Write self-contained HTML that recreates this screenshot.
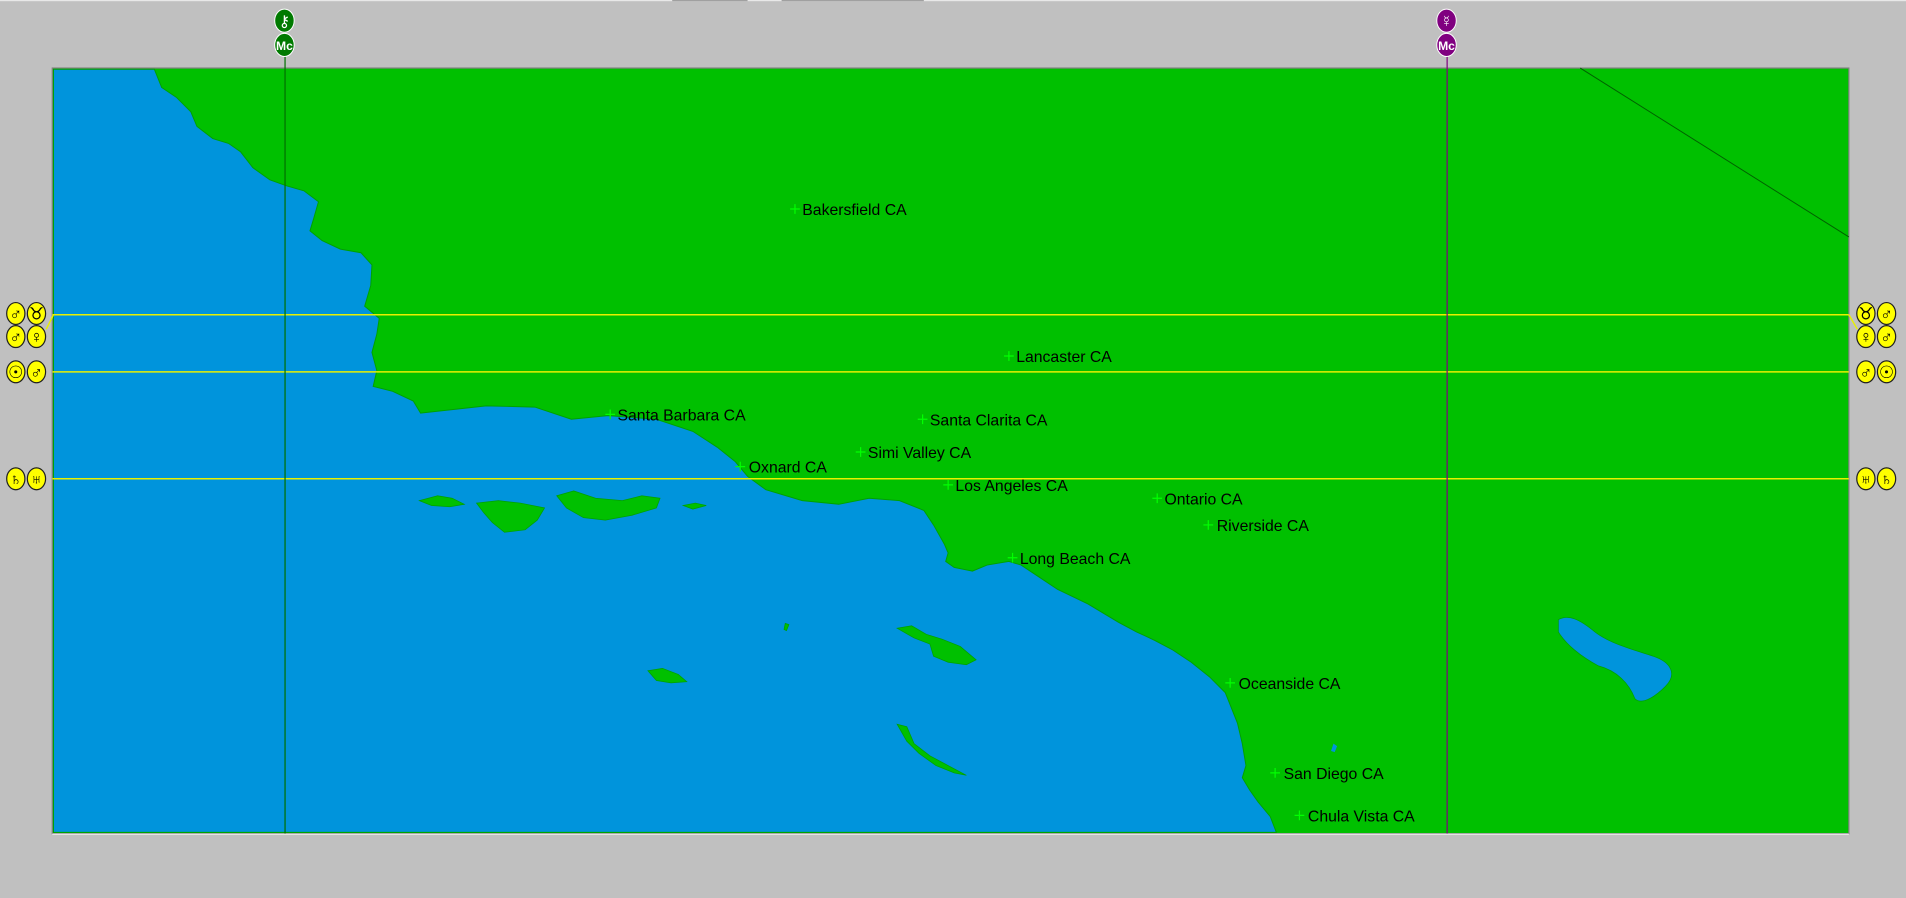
<!DOCTYPE html>
<html><head><meta charset="utf-8"><style>
html,body{margin:0;padding:0;background:#c0c0c0;overflow:hidden}
svg{display:block}
text{font-family:"Liberation Sans","DejaVu Sans",sans-serif}
</style></head><body>
<svg width="1906" height="898" viewBox="0 0 1568 739" preserveAspectRatio="none" xmlns="http://www.w3.org/2000/svg">
<rect x="0" y="0" width="1568" height="739" fill="#c0c0c0"/>
<rect x="0" y="0" width="1568" height="1" fill="#e8e8e8"/>
<rect x="553" y="0" width="62" height="1" fill="#a0a0a0"/>
<rect x="643" y="0" width="117" height="1" fill="#a0a0a0"/>
<rect x="43" y="56" width="1478" height="630" fill="#00c000" stroke="#808080" stroke-width="1"/>
<polygon fill="#0094dc" stroke="#00a000" stroke-width="0.8" points="44,57 127,57 133,72 145,80 157,92 162,104 175,114 188,118 198,125 208,138 222,148 236,153 250,157 262,166 258,180 255,190 265,198 280,205 297,208 306,218 305,235 300,252 312,262 310,275 306,290 310,305 307,318 323,322 340,330 346,340 400,334 440,335 470,345 500,342 540,345 570,355 590,368 605,380 615,392 630,403 660,412 690,415 715,410 740,412 760,420 768,432 777,448 780,455 778,462 785,467 800,470 812,465 830,462 840,465 855,475 870,485 895,497 920,512 935,520 950,527 965,535 980,545 995,557 1008,570 1012,580 1018,595 1022,612 1025,630 1022,640 1028,650 1035,660 1045,672 1050,685 44,685"/>
<g fill="#00c000" stroke="#00a000" stroke-width="0.6">
<polygon points="345,412 360,408 372,410 382,415 370,417 355,416"/>
<polygon points="392,414 410,412 428,414 448,418 442,428 432,436 415,438 405,430 398,422"/>
<polygon points="458,408 472,404 490,410 512,412 528,408 543,410 540,418 520,424 498,428 480,426 466,418"/>
<polygon points="562,416 572,414 581,416 570,419"/>
<polygon points="533,552 545,550 558,555 565,561 552,562 540,560"/>
<polygon points="738,517 750,515 762,522 775,526 790,532 803,543 795,547 780,545 768,540 765,530 752,525"/>
<polygon points="738,596 746,598 752,612 765,622 780,630 795,638 785,636 770,630 756,620 746,610"/>
<polygon points="646,513 649,514 647,519 645,518"/>
</g>
<path d="M1282,510 C1290,505 1300,510 1312,520 C1325,530 1345,535 1360,540 C1375,545 1380,555 1370,565 C1360,575 1350,580 1345,575 C1340,562 1330,552 1315,548 C1300,540 1288,530 1282,520 Z" fill="#0094dc" stroke="#00a000" stroke-width="0.6"/>
<path d="M1097,612 l3,2 -2,5 -3,-1z" fill="#0094dc"/>
<line x1="1300" y1="56" x2="1521" y2="195" stroke="#006000" stroke-width="0.8"/>
<g stroke="#e8f000" stroke-width="1.2">
<line x1="43" y1="259" x2="1521" y2="259"/>
<line x1="43" y1="306" x2="1521" y2="306"/>
<line x1="43" y1="394" x2="1521" y2="394"/>
<line x1="38" y1="271" x2="44" y2="259"/>
<line x1="1521" y1="259" x2="1528" y2="271"/>
</g>
<line x1="234.5" y1="44" x2="234.5" y2="686" stroke="#007000" stroke-width="1"/>
<line x1="1190.5" y1="44" x2="1190.5" y2="686" stroke="#800080" stroke-width="1"/>
<g stroke="#fff" stroke-width="0.8">
<ellipse cx="234" cy="17" rx="8" ry="9.5" fill="#007a00"/>
<ellipse cx="234" cy="37" rx="8" ry="9.5" fill="#007a00"/>
<ellipse cx="1190" cy="17" rx="8" ry="9.5" fill="#800080"/>
<ellipse cx="1190" cy="37" rx="8" ry="9.5" fill="#800080"/>
</g>
<g fill="#fff" font-size="13" text-anchor="middle">
<text x="234" y="22" font-family="DejaVu Sans">⚷</text>
<text x="234" y="41" font-size="10" font-weight="bold">Mc</text>
<text x="1190" y="22" font-family="DejaVu Sans">☿</text>
<text x="1190" y="41" font-size="10" font-weight="bold">Mc</text>
</g>
<g fill="#ffff00" stroke="#202020" stroke-width="1">
<ellipse cx="13" cy="258" rx="7.5" ry="9"/><ellipse cx="30" cy="258" rx="7.5" ry="9"/>
<ellipse cx="13" cy="277" rx="7.5" ry="9"/><ellipse cx="30" cy="277" rx="7.5" ry="9"/>
<ellipse cx="13" cy="306" rx="7.5" ry="9"/><ellipse cx="30" cy="306" rx="7.5" ry="9"/>
<ellipse cx="13" cy="394" rx="7.5" ry="9"/><ellipse cx="30" cy="394" rx="7.5" ry="9"/>
<ellipse cx="1535" cy="258" rx="7.5" ry="9"/><ellipse cx="1552" cy="258" rx="7.5" ry="9"/>
<ellipse cx="1535" cy="277" rx="7.5" ry="9"/><ellipse cx="1552" cy="277" rx="7.5" ry="9"/>
<ellipse cx="1535" cy="306" rx="7.5" ry="9"/><ellipse cx="1552" cy="306" rx="7.5" ry="9"/>
<ellipse cx="1535" cy="394" rx="7.5" ry="9"/><ellipse cx="1552" cy="394" rx="7.5" ry="9"/>
</g>
<g fill="#000" font-size="14" text-anchor="middle" font-family="DejaVu Sans" font-weight="bold">
<text x="13" y="263">♂</text><text x="30" y="263">♉</text>
<text x="13" y="282">♂</text><text x="30" y="282">♀</text>
<text x="13" y="311">☉</text><text x="30" y="311">♂</text>
<text x="13" y="399">♄</text><text x="30" y="399">♅</text>
<text x="1535" y="263">♉</text><text x="1552" y="263">♂</text>
<text x="1535" y="282">♀</text><text x="1552" y="282">♂</text>
<text x="1535" y="311">♂</text><text x="1552" y="311">☉</text>
<text x="1535" y="399">♅</text><text x="1552" y="399">♄</text>
</g>
<g font-size="13" fill="#000">
<text x="660" y="177">Bakersfield CA</text>
<text x="836" y="298">Lancaster CA</text>
<text x="508" y="346">Santa Barbara CA</text>
<text x="765" y="350">Santa Clarita CA</text>
<text x="714" y="377">Simi Valley CA</text>
<text x="616" y="389">Oxnard CA</text>
<text x="786" y="404">Los Angeles CA</text>
<text x="958" y="415">Ontario CA</text>
<text x="1001" y="437">Riverside CA</text>
<text x="839" y="464">Long Beach CA</text>
<text x="1019" y="567">Oceanside CA</text>
<text x="1056" y="641">San Diego CA</text>
<text x="1076" y="676">Chula Vista CA</text>
</g>
<g stroke="#00ff00" stroke-width="1">
<path d="M650,172h8M654,168v8"/>
<path d="M826,293h8M830,289v8"/>
<path d="M498,341h8M502,337v8"/>
<path d="M755,345h8M759,341v8"/>
<path d="M704,372h8M708,368v8"/>
<path d="M605,384h8M609,380v8"/>
<path d="M776,399h8M780,395v8"/>
<path d="M948,410h8M952,406v8"/>
<path d="M990,432h8M994,428v8"/>
<path d="M829,459h8M833,455v8"/>
<path d="M1008,562h8M1012,558v8"/>
<path d="M1045,636h8M1049,632v8"/>
<path d="M1065,671h8M1069,667v8"/>
</g>
<line x1="43" y1="686.5" x2="1521" y2="686.5" stroke="#f0f0f0" stroke-width="1"/>
</svg>
</body></html>
